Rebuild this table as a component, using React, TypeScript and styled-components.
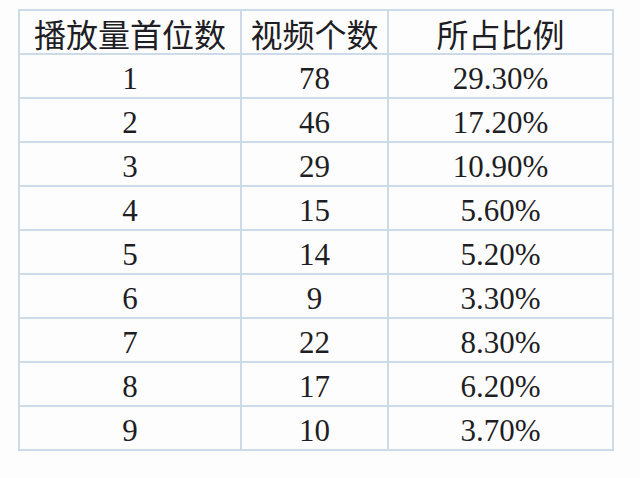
import styled, { createGlobalStyle } from 'styled-components'

const rows = [
  ['1', '78', '29.30%'],
  ['2', '46', '17.20%'],
  ['3', '29', '10.90%'],
  ['4', '15', '5.60%'],
  ['5', '14', '5.20%'],
  ['6', '9', '3.30%'],
  ['7', '22', '8.30%'],
  ['8', '17', '6.20%'],
  ['9', '10', '3.70%'],
]

const App = () => {
  return (
    <Page>
      <GlobalStyle />
      <Table>
        <colgroup>
          <col style={{ width: 222 }} />
          <col style={{ width: 147 }} />
          <col style={{ width: 225 }} />
        </colgroup>
        <thead>
          <tr>
            <HeadCell>播放量首位数</HeadCell>
            <HeadCell>视频个数</HeadCell>
            <HeadCell>所占比例</HeadCell>
          </tr>
        </thead>
        <tbody>
          {rows.map((r) => (
            <tr key={r[0]}>
              <Cell>{r[0]}</Cell>
              <Cell>{r[1]}</Cell>
              <Cell>{r[2]}</Cell>
            </tr>
          ))}
        </tbody>
      </Table>
    </Page>
  )
}

const GlobalStyle = createGlobalStyle`
  body {
    margin: 0;
    background: #fdfdfd;
  }
`

const Page = styled.div`
  width: 640px;
  height: 478px;
  padding: 9px 0 0 18px;
  box-sizing: border-box;
  background: #fdfdfd;
`

const Table = styled.table`
  border-collapse: collapse;
  table-layout: fixed;
  width: 596px;
  border: 2px solid #c3d3e3;
`

const HeadCell = styled.th`
  height: 40px;
  padding: 2px 0 0;
  border: 2px solid #cddbe8;
  font-family: "Noto Sans CJK SC", sans-serif;
  font-weight: 400;
  font-size: 32px;
  line-height: 1;
  color: #1e1e24;
  text-align: center;
  vertical-align: middle;
`

const Cell = styled.td`
  height: 38px;
  padding: 4px 0 0;
  border: 2px solid #cddbe8;
  font-family: "Liberation Serif", serif;
  font-size: 31px;
  line-height: 1;
  color: #1e1e24;
  text-align: center;
  vertical-align: middle;
`

export default App
